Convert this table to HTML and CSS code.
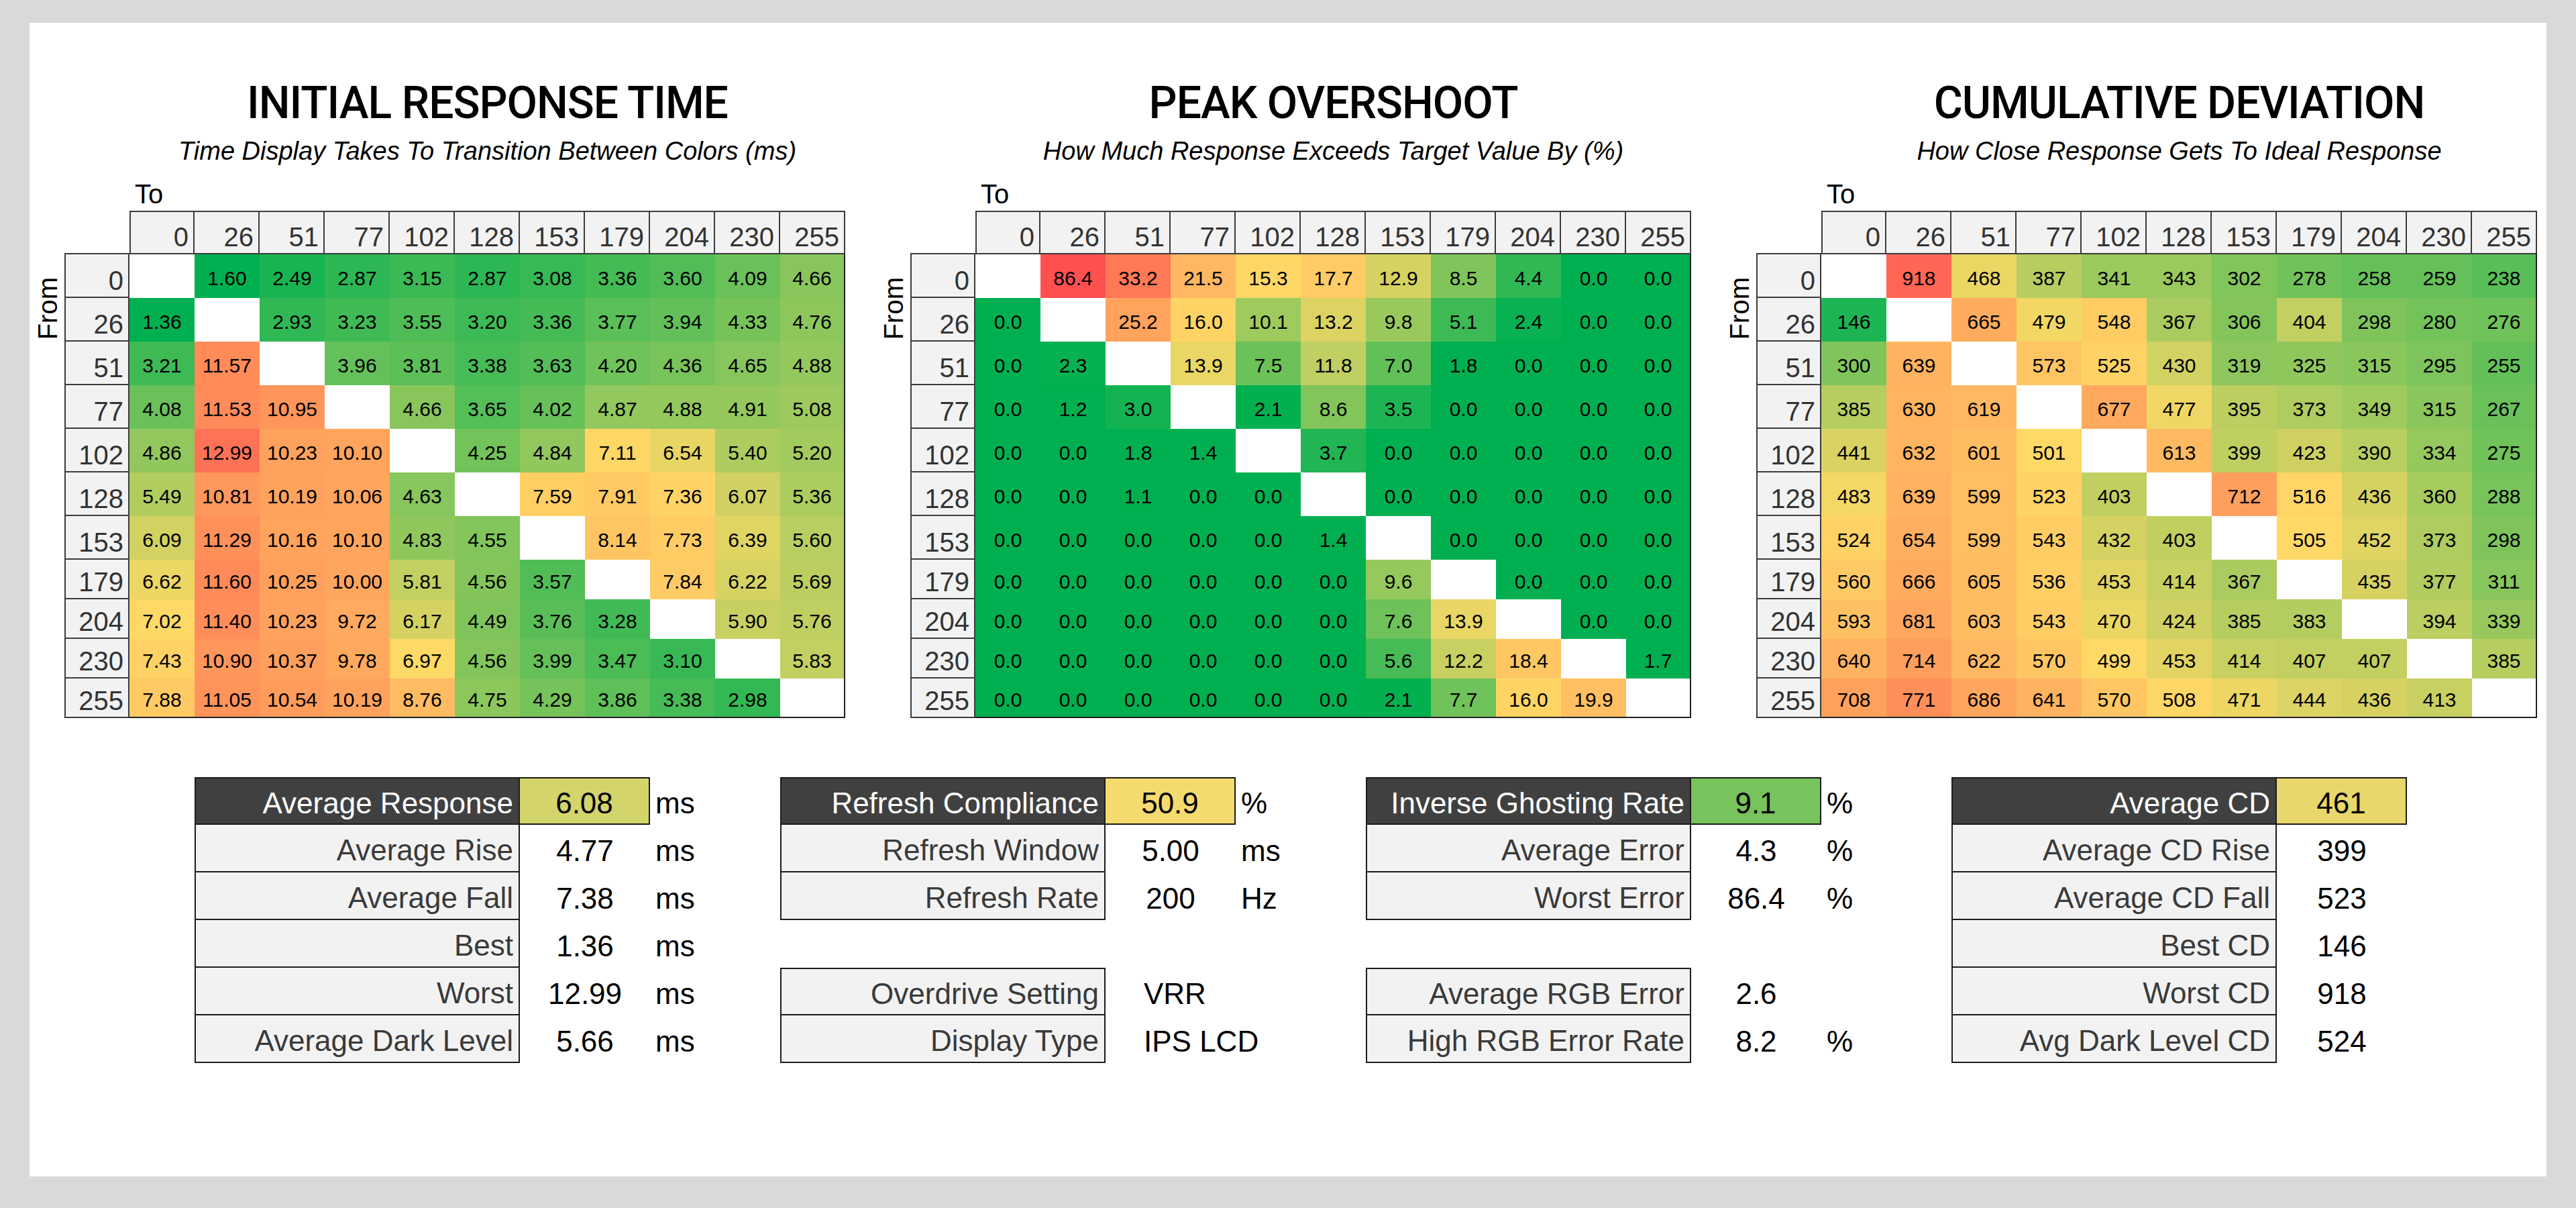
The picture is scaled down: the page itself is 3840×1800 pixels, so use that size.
FILE: index.html
```html
<!DOCTYPE html>
<html lang="en">
<head>
<meta charset="utf-8">
<title>Response Time Report</title>
<link rel="stylesheet" href="styles.css">
</head>
<body>
<div class="panel">
  <div class="charts">
    <section class="chart">
      <div class="chart-head">
        <h1 class="title">INITIAL RESPONSE TIME</h1>
        <p class="subtitle">Time Display Takes To Transition Between Colors (ms)</p>
        <div class="to-label">To</div>
      </div>
      <div class="chart-body">
        <div class="from-col"><span class="from-label">From</span></div>
        <div class="grid" id="grid-rt"></div>
      </div>
    </section>
    <section class="chart">
      <div class="chart-head">
        <h1 class="title">PEAK OVERSHOOT</h1>
        <p class="subtitle">How Much Response Exceeds Target Value By (%)</p>
        <div class="to-label">To</div>
      </div>
      <div class="chart-body">
        <div class="from-col"><span class="from-label">From</span></div>
        <div class="grid" id="grid-os"></div>
      </div>
    </section>
    <section class="chart">
      <div class="chart-head">
        <h1 class="title">CUMULATIVE DEVIATION</h1>
        <p class="subtitle">How Close Response Gets To Ideal Response</p>
        <div class="to-label">To</div>
      </div>
      <div class="chart-body">
        <div class="from-col"><span class="from-label">From</span></div>
        <div class="grid" id="grid-cd"></div>
      </div>
    </section>
  </div>

  <div class="stats">
    <div class="stat-block">
      <div class="lbl head first">Average Response</div><div class="val head c-rt">6.08</div><div class="unit">ms</div>
      <div class="lbl">Average Rise</div><div class="val">4.77</div><div class="unit">ms</div>
      <div class="lbl">Average Fall</div><div class="val">7.38</div><div class="unit">ms</div>
      <div class="lbl">Best</div><div class="val">1.36</div><div class="unit">ms</div>
      <div class="lbl">Worst</div><div class="val">12.99</div><div class="unit">ms</div>
      <div class="lbl">Average Dark Level</div><div class="val">5.66</div><div class="unit">ms</div>
    </div>
    <div class="stat-block">
      <div class="lbl head first">Refresh Compliance</div><div class="val head c-rc">50.9</div><div class="unit">%</div>
      <div class="lbl">Refresh Window</div><div class="val">5.00</div><div class="unit">ms</div>
      <div class="lbl">Refresh Rate</div><div class="val">200</div><div class="unit">Hz</div>
      <div class="spacer"></div>
      <div class="lbl first">Overdrive Setting</div><div class="val text">VRR</div><div class="unit"></div>
      <div class="lbl">Display Type</div><div class="val text">IPS LCD</div><div class="unit"></div>
    </div>
    <div class="stat-block">
      <div class="lbl head first">Inverse Ghosting Rate</div><div class="val head c-ig">9.1</div><div class="unit">%</div>
      <div class="lbl">Average Error</div><div class="val">4.3</div><div class="unit">%</div>
      <div class="lbl">Worst Error</div><div class="val">86.4</div><div class="unit">%</div>
      <div class="spacer"></div>
      <div class="lbl first">Average RGB Error</div><div class="val">2.6</div><div class="unit"></div>
      <div class="lbl">High RGB Error Rate</div><div class="val">8.2</div><div class="unit">%</div>
    </div>
    <div class="stat-block">
      <div class="lbl head first">Average CD</div><div class="val head c-cd">461</div><div class="unit"></div>
      <div class="lbl">Average CD Rise</div><div class="val">399</div><div class="unit"></div>
      <div class="lbl">Average CD Fall</div><div class="val">523</div><div class="unit"></div>
      <div class="lbl">Best CD</div><div class="val">146</div><div class="unit"></div>
      <div class="lbl">Worst CD</div><div class="val">918</div><div class="unit"></div>
      <div class="lbl">Avg Dark Level CD</div><div class="val">524</div><div class="unit"></div>
    </div>
  </div>
</div>
<script src="script.js"></script>
</body>
</html>
```

FILE: styles.css
```css
html, body {
  margin: 0;
}
body {
  background: #d9d9d9;
  padding: 34px 44px 47px;
  font-family: "Liberation Sans", Arial, sans-serif;
  color: #000;
}
.panel {
  background: #fff;
  height: 1719px;
  box-sizing: border-box;
  padding-top: 87px;
}
.charts {
  display: flex;
  gap: 45px;
}
.chart {
  width: 1216px;
  flex: none;
}
.chart-head {
  margin-left: 149px;
  width: 1067px;
  text-align: center;
}
.title {
  margin: 0;
  font-family: Roboto, "Liberation Sans", sans-serif;
  font-weight: 500;
  font-size: 66px;
  line-height: 66px;
  letter-spacing: -1px;
  color: #000;
}
.subtitle {
  margin: 18px 0 0;
  font-style: italic;
  font-size: 38px;
  line-height: 40px;
}
.to-label {
  text-align: left;
  padding-left: 8px;
  margin: 24px 0 5px;
  font-size: 40px;
  line-height: 40px;
}
.chart-body {
  display: flex;
}
.from-col {
  width: 52px;
  flex: none;
  box-sizing: border-box;
  padding-top: 99px;
  padding-right: 5px;
  display: flex;
  justify-content: flex-end;
  align-items: flex-start;
}
.from-label {
  writing-mode: vertical-rl;
  transform: rotate(180deg);
  font-size: 40px;
  line-height: 40px;
}
.grid {
  display: grid;
  grid-template-columns: repeat(12, 97px);
  grid-template-rows: repeat(8, 65px) repeat(4, 59px);
}
.grid > div {
  box-sizing: border-box;
  display: flex;
}
.corner {
  border-bottom: 2px solid #3c3c3c;
}
.colhead, .rowhead {
  background: #f2f2f2;
  color: #333;
  font-size: 40px;
  line-height: 40px;
  align-items: flex-end;
  justify-content: flex-end;
  padding: 0 7px 4px 0;
}
.colhead {
  border-top: 2px solid #3c3c3c;
  border-right: 2px solid #3c3c3c;
  border-bottom: 2px solid #3c3c3c;
}
.colhead.first {
  border-left: 2px solid #3c3c3c;
}
.rowhead {
  border-left: 2px solid #3c3c3c;
  border-right: 2px solid #3c3c3c;
  border-bottom: 2px solid #3c3c3c;
}
.cell {
  align-items: center;
  justify-content: center;
  padding-top: 6px;
  font-size: 30px;
  line-height: 30px;
  color: #000;
  background: #fff;
}
.cell.last-col {
  border-right: 2px solid #222;
}
.cell.last-row {
  border-bottom: 2px solid #222;
}

.stats {
  display: flex;
  margin: 88px 0 0 246px;
}
.stat-block {
  display: grid;
  grid-template-columns: 485px 194px 194px;
  grid-auto-rows: 71px;
  flex: none;
}
.stat-block > div {
  box-sizing: border-box;
  display: flex;
  align-items: center;
  padding-top: 6px;
  font-size: 44px;
  line-height: 44px;
  white-space: nowrap;
}
.lbl {
  background: #f2f2f2;
  color: #3a3a3a;
  justify-content: flex-end;
  padding-right: 8px;
  border-left: 2px solid #1c1c1c;
  border-right: 2px solid #1c1c1c;
  border-bottom: 2px solid #1c1c1c;
}
.lbl.first {
  border-top: 2px solid #1c1c1c;
}
.lbl.head {
  background: #404040;
  color: #fff;
}
.val {
  justify-content: center;
  color: #000;
}
.val.head {
  border-top: 2px solid #1c1c1c;
  border-right: 2px solid #1c1c1c;
  border-bottom: 2px solid #1c1c1c;
}
.val.text {
  justify-content: flex-start;
  padding-left: 57px;
  overflow: visible;
}
.unit {
  justify-content: flex-start;
  padding-left: 8px;
}
.spacer {
  grid-column: 1 / 4;
}
.c-rt { background: #d3d56a; }
.c-rc { background: #f5db6d; }
.c-ig { background: #77c35c; }
.c-cd { background: #e8d86b; }
```

FILE: script.js
```javascript
(function () {
  var LEVELS = [0, 26, 51, 77, 102, 128, 153, 179, 204, 230, 255];
  var GREEN = [0, 176, 80], YELLOW = [255, 217, 102], RED = [255, 80, 80];

  function mix(a, b, t) {
    return [0, 1, 2].map(function (i) { return Math.round(a[i] + (b[i] - a[i]) * t); });
  }
  function color(v, g, y, r) {
    var c;
    if (v <= g) c = GREEN;
    else if (v <= y) c = mix(GREEN, YELLOW, (v - g) / (y - g));
    else if (v < r) c = mix(YELLOW, RED, (v - y) / (r - y));
    else c = RED;
    return 'rgb(' + c.join(',') + ')';
  }

  var X = null;
  var charts = {
    'grid-rt': { g: 2, y: 7, r: 15, dec: 2, data: [
      [X, 1.60, 2.49, 2.87, 3.15, 2.87, 3.08, 3.36, 3.60, 4.09, 4.66],
      [1.36, X, 2.93, 3.23, 3.55, 3.20, 3.36, 3.77, 3.94, 4.33, 4.76],
      [3.21, 11.57, X, 3.96, 3.81, 3.38, 3.63, 4.20, 4.36, 4.65, 4.88],
      [4.08, 11.53, 10.95, X, 4.66, 3.65, 4.02, 4.87, 4.88, 4.91, 5.08],
      [4.86, 12.99, 10.23, 10.10, X, 4.25, 4.84, 7.11, 6.54, 5.40, 5.20],
      [5.49, 10.81, 10.19, 10.06, 4.63, X, 7.59, 7.91, 7.36, 6.07, 5.36],
      [6.09, 11.29, 10.16, 10.10, 4.83, 4.55, X, 8.14, 7.73, 6.39, 5.60],
      [6.62, 11.60, 10.25, 10.00, 5.81, 4.56, 3.57, X, 7.84, 6.22, 5.69],
      [7.02, 11.40, 10.23, 9.72, 6.17, 4.49, 3.76, 3.28, X, 5.90, 5.76],
      [7.43, 10.90, 10.37, 9.78, 6.97, 4.56, 3.99, 3.47, 3.10, X, 5.83],
      [7.88, 11.05, 10.54, 10.19, 8.76, 4.75, 4.29, 3.86, 3.38, 2.98, X]
    ]},
    'grid-os': { g: 2, y: 15, r: 41, dec: 1, data: [
      [X, 86.4, 33.2, 21.5, 15.3, 17.7, 12.9, 8.5, 4.4, 0, 0],
      [0, X, 25.2, 16.0, 10.1, 13.2, 9.8, 5.1, 2.4, 0, 0],
      [0, 2.3, X, 13.9, 7.5, 11.8, 7.0, 1.8, 0, 0, 0],
      [0, 1.2, 3.0, X, 2.1, 8.6, 3.5, 0, 0, 0, 0],
      [0, 0, 1.8, 1.4, X, 3.7, 0, 0, 0, 0, 0],
      [0, 0, 1.1, 0, 0, X, 0, 0, 0, 0, 0],
      [0, 0, 0, 0, 0, 1.4, X, 0, 0, 0, 0],
      [0, 0, 0, 0, 0, 0, 9.6, X, 0, 0, 0],
      [0, 0, 0, 0, 0, 0, 7.6, 13.9, X, 0, 0],
      [0, 0, 0, 0, 0, 0, 5.6, 12.2, 18.4, X, 1.7],
      [0, 0, 0, 0, 0, 0, 2.1, 7.7, 16.0, 19.9, X]
    ]},
    'grid-cd': { g: 100, y: 500, r: 1000, dec: 0, data: [
      [X, 918, 468, 387, 341, 343, 302, 278, 258, 259, 238],
      [146, X, 665, 479, 548, 367, 306, 404, 298, 280, 276],
      [300, 639, X, 573, 525, 430, 319, 325, 315, 295, 255],
      [385, 630, 619, X, 677, 477, 395, 373, 349, 315, 267],
      [441, 632, 601, 501, X, 613, 399, 423, 390, 334, 275],
      [483, 639, 599, 523, 403, X, 712, 516, 436, 360, 288],
      [524, 654, 599, 543, 432, 403, X, 505, 452, 373, 298],
      [560, 666, 605, 536, 453, 414, 367, X, 435, 377, 311],
      [593, 681, 603, 543, 470, 424, 385, 383, X, 394, 339],
      [640, 714, 622, 570, 499, 453, 414, 407, 407, X, 385],
      [708, 771, 686, 641, 570, 508, 471, 444, 436, 413, X]
    ]}
  };

  function div(cls, text) {
    var d = document.createElement('div');
    d.className = cls;
    if (text !== undefined) d.textContent = text;
    return d;
  }

  Object.keys(charts).forEach(function (id) {
    var cfg = charts[id];
    var grid = document.getElementById(id);
    if (!grid) return;
    var frag = document.createDocumentFragment();
    frag.appendChild(div('corner'));
    LEVELS.forEach(function (lv, i) {
      frag.appendChild(div('colhead' + (i === 0 ? ' first' : ''), String(lv)));
    });
    cfg.data.forEach(function (row, r) {
      frag.appendChild(div('rowhead', String(LEVELS[r])));
      row.forEach(function (v, c) {
        var cls = 'cell';
        if (c === row.length - 1) cls += ' last-col';
        if (r === cfg.data.length - 1) cls += ' last-row';
        var cell;
        if (v === null) {
          cell = div(cls + ' blank');
        } else {
          cell = div(cls, v.toFixed(cfg.dec));
          cell.style.background = color(v, cfg.g, cfg.y, cfg.r);
        }
        frag.appendChild(cell);
      });
    });
    grid.appendChild(frag);
  });
})();
```
